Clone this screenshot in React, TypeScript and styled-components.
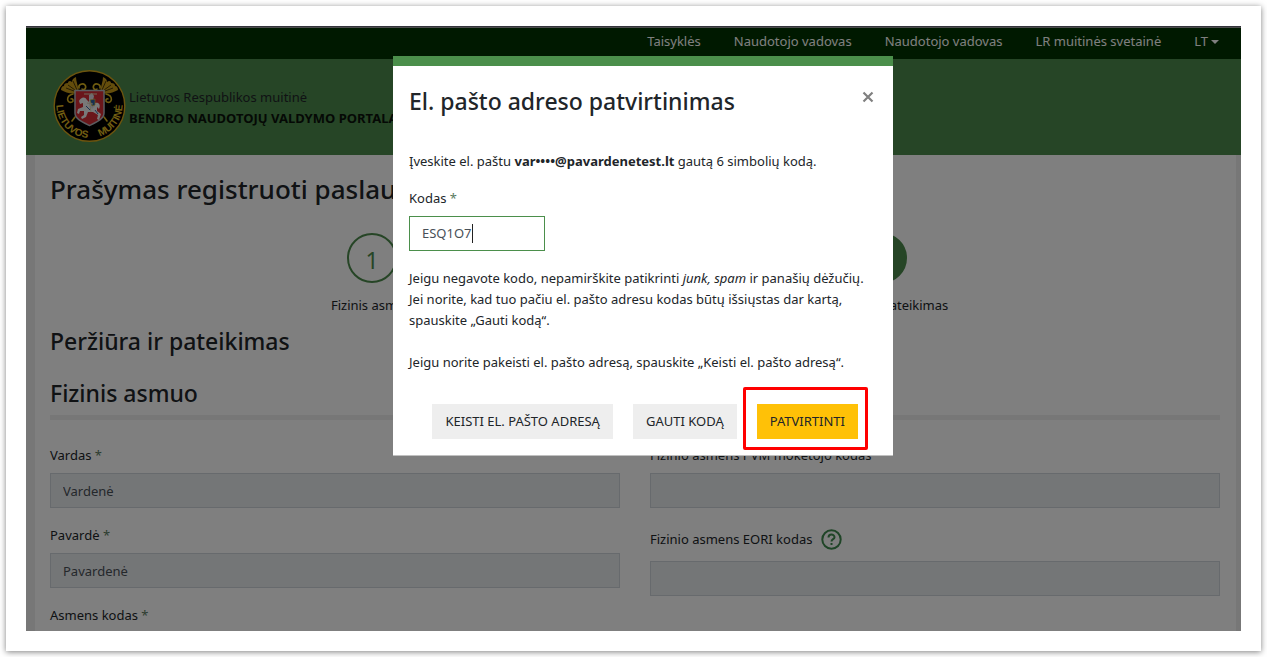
import React from "react";
import styled, { createGlobalStyle } from "styled-components";

const Global = createGlobalStyle`
  * { box-sizing: border-box; }
  body {
    margin: 0;
    background: #fff;
    font-family: "Noto Sans", "Open Sans", sans-serif;
    font-size: 13px;
    line-height: 21px;
    color: #212529;
  }
  h1, h2, p { margin: 0; font-weight: 500; }
  p { font-weight: 400; }
  button, input, select { font: inherit; color: inherit; }
`;

const Card = styled.div`
  margin: 6px;
  padding: 20px;
  background: #fff;
  box-shadow: 0 1px 6px rgba(0, 0, 0, 0.5);
`;

const Viewport = styled.div`
  position: relative;
  height: calc(100vh - 52px);
  overflow: hidden;
  background: #eee;
  border-top: 1px solid #33333b;
`;

const TopBar = styled.nav`
  display: flex;
  justify-content: flex-end;
  align-items: center;
  gap: 33px;
  height: 32px;
  padding: 0 22px 4px;
  border-top: 1px solid #999;
  background: #003300;
  color: #fff;
`;

const NavLink = styled.a`
  color: inherit;
  text-decoration: none;
`;

const LanguageButton = styled.button`
  display: flex;
  align-items: center;
  gap: 3px;
  padding: 0;
  border: 0;
  background: none;
`;

const Caret = styled.span`
  border: 4px solid transparent;
  border-top-color: currentColor;
  border-bottom-width: 0;
`;

const Header = styled.header`
  display: flex;
  align-items: center;
  gap: 3px;
  height: 96px;
  padding: 0 27px;
  background: #4c8a4c;
`;

const Brand = styled.div`
  padding-top: 1px;
  white-space: nowrap;
  color: #212529;
  strong { display: block; color: #0a120a; }
`;

const Content = styled.main`
  margin: 0 5px 0 9px;
  padding: 16px 16px 0 15px;
  background: #fff;
`;

const PageTitle = styled.h1`
  font-size: 26px;
  line-height: 36px;
  white-space: nowrap;
`;

const Steps = styled.ol`
  display: flex;
  justify-content: center;
  gap: 370px;
  margin: 26px 16px 0 0;
  padding: 0;
  list-style: none;
`;

const Step = styled.li`
  display: flex;
  flex-direction: column;
  align-items: center;
  gap: 12px;
  width: 140px;
  white-space: nowrap;
`;

const StepCircle = styled.span<{ $filled?: boolean }>`
  display: flex;
  align-items: center;
  justify-content: center;
  width: 50px;
  height: 50px;
  padding-top: 4px;
  border: 2px solid #4c8a4c;
  border-radius: 50%;
  background: ${(p) => (p.$filled ? "#4c8a4c" : "transparent")};
  color: ${(p) => (p.$filled ? "#fff" : "#4c8a4c")};
  font-size: 23px;
`;

const SectionTitle = styled.h2<{ $ruled?: boolean }>`
  margin-top: ${(p) => (p.$ruled ? "22px" : "10px")};
  padding-bottom: ${(p) => (p.$ruled ? "7px" : "0")};
  border-bottom: ${(p) => (p.$ruled ? "5px solid #eee" : "0")};
  font-size: 23px;
  line-height: 30px;
`;

const FormGrid = styled.form`
  display: grid;
  grid-template-columns: 1fr 1fr;
  gap: 30px;
  padding-top: 25px;
`;

const Column = styled.div`
  display: flex;
  flex-direction: column;
  gap: 17px;
`;

const Field = styled.div`
  display: flex;
  flex-direction: column;
  gap: 7px;
`;

const LabelRow = styled.div<{ $tall?: boolean }>`
  display: flex;
  align-items: center;
  gap: 9px;
  height: ${(p) => (p.$tall ? "29px" : "21px")};
`;

const Star = styled.span`
  color: #5a7a5f;
`;

const DisabledInput = styled.input`
  width: 100%;
  height: 35px;
  padding: 0 12px;
  border: 1px solid #ced4da;
  border-radius: 0;
  background: #e9ecef;
  && { color: #495057; }
`;

const HelpButton = styled.button`
  display: flex;
  padding: 0;
  border: 0;
  background: none;
`;

const Backdrop = styled.div`
  position: absolute;
  inset: -1px 0 0;
  display: flex;
  justify-content: center;
  align-items: flex-start;
  padding: 30px 0 0 19px;
  background: rgba(0, 0, 0, 0.5);
`;

const Dialog = styled.section`
  width: 500px;
  padding: 20px 16px 16px;
  border-top: 10px solid #4b8f4b;
  border-bottom: 1px solid #c0c0c0;
  background: #fff;
`;

const DialogHead = styled.div`
  display: flex;
  justify-content: space-between;
  align-items: flex-start;
  margin-bottom: 35px;
`;

const DialogTitle = styled.h2`
  font-size: 23px;
  line-height: 30px;
`;

const CloseButton = styled.button`
  display: flex;
  padding: 5px 3px;
  border: 0;
  background: none;
`;

const CodeField = styled.div`
  display: flex;
  flex-direction: column;
  align-items: flex-start;
  gap: 7px;
  margin: 16px 0 17px;
`;

const CodeBox = styled.div`
  display: flex;
  align-items: center;
  width: 136px;
  height: 35px;
  padding: 0 12px;
  border: 1px solid #4b8f4b;
`;

const CodeInput = styled.input`
  field-sizing: content;
  min-width: 0;
  padding: 0;
  border: 0;
  outline: 0;
  background: none;
  && { color: #495057; }
`;

const TextCursor = styled.span`
  width: 1px;
  height: 19px;
  background: #222;
`;

const Actions = styled.div`
  display: flex;
  justify-content: flex-end;
  gap: 20px;
  margin: 31px 19px 0 0;
`;

const Highlight = styled.div`
  position: relative;
  &::after {
    content: "";
    position: absolute;
    inset: -17px -10px -11px -14px;
    border: 3px solid #ff0000;
    border-radius: 2px;
    pointer-events: none;
  }
`;

const Button = styled.button<{ $primary?: boolean }>`
  height: 35px;
  padding: 0 13px;
  border: 0;
  background: ${(p) => (p.$primary ? "#ffc107" : "#eee")};
  text-transform: uppercase;
  white-space: nowrap;
`;

function Wing() {
  return (
    <g>
      <path
        d="M26 23C25 17 23 12 23 8C20 9 19 11 19 13C17 11 15 12 15 14C12 14 11 15 11 17C9 17 8 19 8 21C13 24 21 26 26 23Z"
        fill="#c99a18"
      />
      <path d="M24 21L20 12M22 21L15 16M21 22L13 19" stroke="#3d2f08" strokeWidth="0.9" fill="none" />
      <g fill="none" stroke="#e0b820" strokeLinecap="round" strokeWidth="1.600">
        <path d="M26 19C25 15 30 14 32 16C34 19 31 22 29 20" />
        <path d="M20 25C12 27 14 35 19 33C21 32 20 29 18 30" />
        <path d="M22 48L19 52" />
      </g>
    </g>
  );
}

function Emblem() {
  return (
    <svg width="73" height="74" viewBox="0 1 73 74" role="img" aria-label="Lietuvos muitinė">
      <defs>
        <path id="ring" d="M3.500 36A33 33 0 0 0 69.500 36" />
      </defs>
      <circle cx="36.500" cy="37" r="35.300" fill="#000" stroke="#d9a81c" strokeWidth="1.400" />
      <Wing />
      <g transform="translate(73 0) scale(-1 1)"><Wing /></g>
      <path d="M22 21.500H51V44C51 50 44 53 36.500 56.500C29 53 22 50 22 44Z" fill="#d42c34" stroke="#b8b8c0" strokeWidth="1.500" />
      <path d="M26 32C28 28 32 27 34 31L36 33L42 34C46 33 48 36 46 40L44 38L44 42L48 45L46 51L44 50L45 46L40 43L35 43L33 48L29 50L28 48L31 46L31 42L27 42L26 45L24 44L25 40L30 38L30 34L27 35Z" fill="#f2f2f2" />
      <path d="M36 26L39 24L41 27L40 32L42 37L39 40L36 36Z" fill="#dcdce4" />
      <path d="M37 31L42 30L42 36L39 37Z" fill="#2c62a8" stroke="#d9b53a" strokeWidth="0.700" />
      <path d="M31 25H44M34 34L40 35M37 37L38 43" stroke="#ddd6b0" strokeWidth="1" fill="none" />
      <path d="M33 37L37 41M42 41L45 45" stroke="#3668a0" strokeWidth="1" />
      <g fill="#e4be24" fontFamily="Liberation Sans, sans-serif" fontWeight="700" fontSize="10">
        <text><textPath href="#ring">LIETUVOS</textPath></text>
        <text textAnchor="end"><textPath href="#ring" startOffset="100%">MUITINĖ</textPath></text>
      </g>
    </svg>
  );
}

interface FormFieldProps {
  id: string;
  label: string;
  value?: string;
  required?: boolean;
  help?: boolean;
}

function FormField({ id, label, value = "", required, help }: FormFieldProps) {
  return (
    <Field>
      <LabelRow $tall={help}>
        <label htmlFor={id}>
          {label}
          {required && <Star> *</Star>}
        </label>
        {help && (
          <HelpButton type="button" aria-label="Pagalba">
            <svg width="21" height="21" viewBox="0 0 21 21" fill="none" stroke="#3f8a4f" strokeWidth="2">
              <circle cx="10.500" cy="10.500" r="9.200" />
              <path d="M7.500 8.500C7.500 4.500 13.500 4.700 13.500 8.200C13.500 10.200 10.500 10.200 10.500 12.600M10.500 14V16" />
            </svg>
          </HelpButton>
        )}
      </LabelRow>
      <DisabledInput id={id} value={value} disabled readOnly />
    </Field>
  );
}

export default function App() {
  const [code, setCode] = React.useState("ESQ1O7");
  return (
    <>
      <Global />
      <Card>
        <Viewport>
          <TopBar>
            <NavLink href="#rules">Taisyklės</NavLink>
            <NavLink href="#guide">Naudotojo vadovas</NavLink>
            <NavLink href="#manual">Naudotojo vadovas</NavLink>
            <NavLink href="#customs">LR muitinės svetainė</NavLink>
            <LanguageButton type="button">LT<Caret /></LanguageButton>
          </TopBar>
          <Header>
            <Emblem />
            <Brand>
              Lietuvos Respublikos muitinė
              <strong>BENDRO NAUDOTOJŲ VALDYMO PORTALAS</strong>
            </Brand>
          </Header>
          <Content>
            <PageTitle>Prašymas registruoti paslaugą</PageTitle>
            <Steps>
              <Step><StepCircle>1</StepCircle>Fizinis asmuo</Step>
              <Step><StepCircle $filled />Peržiūra ir pateikimas</Step>
            </Steps>
            <SectionTitle>Peržiūra ir pateikimas</SectionTitle>
            <SectionTitle $ruled>Fizinis asmuo</SectionTitle>
            <FormGrid>
              <Column>
                <FormField id="name" label="Vardas" value="Vardenė" required />
                <FormField id="surname" label="Pavardė" value="Pavardenė" required />
                <FormField id="personal" label="Asmens kodas" required />
              </Column>
              <Column>
                <FormField id="vat" label="Fizinio asmens PVM mokėtojo kodas" />
                <FormField id="eori" label="Fizinio asmens EORI kodas" help />
              </Column>
            </FormGrid>
          </Content>
          <Backdrop>
            <Dialog role="dialog" aria-modal="true" aria-labelledby="dialog-title">
              <DialogHead>
                <DialogTitle id="dialog-title">El. pašto adreso patvirtinimas</DialogTitle>
                <CloseButton type="button" aria-label="Uždaryti">
                  <svg width="12" height="12" viewBox="0 0 12 12" stroke="#808080" strokeWidth="2.200">
                    <path d="M1.500 1.500L10.500 10.500M10.500 1.500L1.500 10.500" />
                  </svg>
                </CloseButton>
              </DialogHead>
              <p>Įveskite el. paštu <strong>var••••@pavardenetest.lt</strong> gautą 6 simbolių kodą.</p>
              <CodeField>
                <label htmlFor="code">Kodas<Star> *</Star></label>
                <CodeBox>
                  <CodeInput id="code" value={code} onChange={(e) => setCode(e.target.value)} />
                  <TextCursor />
                </CodeBox>
              </CodeField>
              <p>
                Jeigu negavote kodo, nepamirškite patikrinti <em>junk, spam</em> ir panašių dėžučių.
                <br />
                Jei norite, kad tuo pačiu el. pašto adresu kodas būtų išsiųstas dar kartą,
                <br />
                spauskite „Gauti kodą“.
                <br />
                <br />
                Jeigu norite pakeisti el. pašto adresą, spauskite „Keisti el. pašto adresą“.
              </p>
              <Actions>
                <Button type="button">Keisti el. pašto adresą</Button>
                <Button type="button">Gauti kodą</Button>
                <Highlight><Button type="button" $primary>Patvirtinti</Button></Highlight>
              </Actions>
            </Dialog>
          </Backdrop>
        </Viewport>
      </Card>
    </>
  );
}
